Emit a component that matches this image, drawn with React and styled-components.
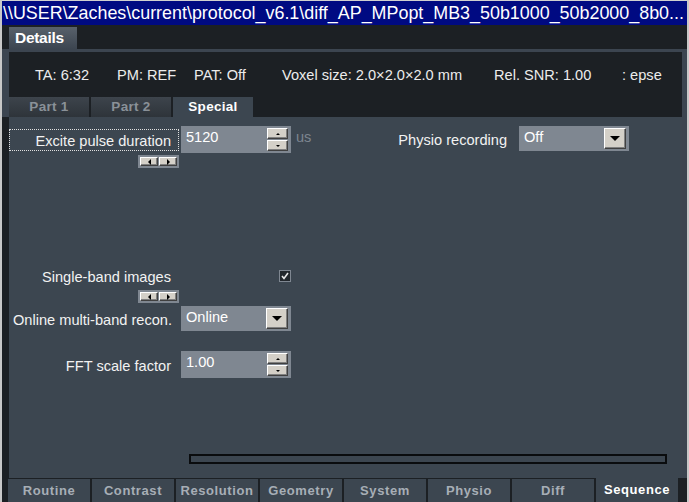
import React from "react";
import styled, { createGlobalStyle } from "styled-components";

const GlobalStyle = createGlobalStyle`
  html, body {
    margin: 0;
    padding: 0;
    background: #1c2024;
  }
  body {
    font-family: "Liberation Sans", Arial, sans-serif;
  }
`;

const Window = styled.div`
  width: 689px;
  height: 502px;
  box-sizing: border-box;
  border-left: 2px solid #c8c8c8;
  border-right: 2px solid #c8c8c8;
  background: #1c2024;
  display: flex;
  flex-direction: column;
  overflow: hidden;
`;

const TitleBar = styled.div`
  height: 25px;
  flex: none;
  background: #000a82;
  color: #ffffff;
  font-size: 17.9px;
  line-height: 24px;
  padding-left: 1px;
  white-space: nowrap;
  overflow: hidden;
  border-top: 1px solid #d0d0d0;
  box-sizing: border-box;
`;

const TopTabs = styled.div`
  height: 24px;
  flex: none;
  display: flex;
  align-items: flex-end;
  padding-left: 7px;
`;

const DetailsTab = styled.div`
  width: 68px;
  height: 22px;
  box-sizing: border-box;
  padding-left: 6px;
  background: linear-gradient(#58616b, #3c4550);
  color: #ffffff;
  font-weight: bold;
  font-size: 15.5px;
  line-height: 22px;
  letter-spacing: -0.3px;
`;

const Frame = styled.div`
  flex: 1;
  display: flex;
  flex-direction: column;
  background: #3c4550;
  padding: 3px 5px 0 0;
`;

const InfoPanel = styled.div`
  height: 45px;
  flex: none;
  display: flex;
  align-items: center;
  background: #1c2024;
  border-left: 7px solid #3c4550;
  padding-left: 26px;
  color: #ececec;
  font-size: 14.6px;
  white-space: nowrap;
`;

const Stat = styled.span`
  width: ${(p) => (p.$w ? `${p.$w}px` : "auto")};
  flex: none;
`;

const SubTabs = styled.div`
  height: 20px;
  flex: none;
  display: flex;
  gap: 2px;
  background: #1c2024;
  border-left: 7px solid #3c4550;
`;

const SubTab = styled.div`
  width: 80px;
  text-align: center;
  font-weight: bold;
  font-size: 13.5px;
  line-height: 20px;
  letter-spacing: 0.3px;
  color: ${(p) => (p.$active ? "#ffffff" : "#8a9198")};
  background: ${(p) =>
    p.$active ? "#3c4650" : "linear-gradient(#3d444c, #2e343a)"};
`;

const Content = styled.div`
  flex: 1;
  display: flex;
  flex-direction: column;
  background: #3c4650;
  border-left: 7px solid #1c2024;
`;

const TopArea = styled.div`
  display: flex;
`;

const LeftColumn = styled.div`
  width: 380px;
  display: flex;
  flex-direction: column;
`;

const RightColumn = styled.div`
  display: flex;
  flex-direction: column;
`;

const Row = styled.div`
  display: flex;
  align-items: center;
  height: ${(p) => p.$h}px;
  margin-top: ${(p) => p.$mt || 0}px;
`;

const Label = styled.div`
  width: ${(p) => p.$w || 170}px;
  box-sizing: border-box;
  text-align: right;
  padding-right: ${(p) => p.$pr ?? 8}px;
  margin-right: ${(p) => p.$mr ?? 2}px;
  color: #f2f2f2;
  font-size: 14.6px;
  white-space: nowrap;
  height: 22px;
  line-height: 22px;
  border: 1px dotted ${(p) => (p.$focus ? "#e0e0e0" : "transparent")};
`;

const Field = styled.div`
  width: 110px;
  height: ${(p) => p.$h || 27}px;
  box-sizing: border-box;
  background: #7f8791;
  display: flex;
  align-items: flex-start;
  justify-content: space-between;
  padding: 2px 3px 2px 5px;
  color: #ffffff;
  font-size: 14.6px;
`;

const FieldText = styled.span`
  line-height: 18px;
`;

const Bevel = styled.div`
  box-sizing: border-box;
  background: #d4d0c8;
  border-top: 1px solid #ffffff;
  border-left: 1px solid #ffffff;
  border-right: 1px solid #404040;
  border-bottom: 1px solid #404040;
  box-shadow: inset -1px -1px 0 #808080;
  display: flex;
  align-items: center;
  justify-content: center;
`;

const SpinStack = styled.div`
  display: flex;
  flex-direction: column;
  gap: 1px;
`;

const SpinButton = styled(Bevel)`
  width: 21px;
  height: 11px;
`;

const DropButton = styled(Bevel)`
  width: 22px;
  height: 21px;
`;

const Unit = styled.span`
  margin-left: 5px;
  color: #7d858f;
  font-size: 14.6px;
  align-self: flex-start;
  margin-top: 3px;
`;

const Scroller = styled.div`
  width: 41px;
  height: 13px;
  box-sizing: border-box;
  background: #7f8791;
  padding: 2px;
  display: flex;
  gap: 1px;
  margin-left: ${(p) => p.$ml}px;
  margin-top: ${(p) => p.$mt}px;
`;

const ScrollButton = styled(Bevel)`
  flex: 1;
  height: 9px;
`;

const CheckCell = styled.div`
  width: 110px;
  display: flex;
  justify-content: flex-end;
`;

const CheckBox = styled.div`
  width: 12px;
  height: 12px;
  box-sizing: border-box;
  background: #22272c;
  border: 1px solid #7f8791;
  display: flex;
  align-items: center;
  justify-content: center;
`;

const Progress = styled.div`
  margin-top: auto;
  margin-bottom: 14px;
  margin-left: 180px;
  width: 478px;
  height: 10px;
  box-sizing: border-box;
  border: 2px solid #0a0c0e;
`;

const BottomTabs = styled.div`
  height: 24px;
  flex: none;
  display: flex;
  gap: 2px;
  background: #1c2024;
  border-left: 6px solid #1c2024;
  margin-right: -5px;
`;

const BottomTab = styled.div`
  width: 82px;
  margin-top: ${(p) => (p.$active ? 0 : 1)}px;
  text-align: center;
  background: #3c4650;
  font-weight: bold;
  font-size: 13px;
  letter-spacing: 0.6px;
  line-height: ${(p) => (p.$active ? 24 : 23)}px;
  color: ${(p) => (p.$active ? "#ffffff" : "#a7aeb6")};
`;

const Tri = ({ dir, size = 3 }) => {
  const s = size;
  const pts = {
    up: `0,${s} ${s * 2},${s} ${s},0`,
    down: `0,0 ${s * 2},0 ${s},${s}`,
    left: `${s},0 ${s},${s * 2} 0,${s}`,
    right: `0,0 0,${s * 2} ${s},${s}`,
  }[dir];
  const w = dir === "up" || dir === "down" ? s * 2 : s;
  const h = dir === "up" || dir === "down" ? s : s * 2;
  return (
    <svg width={w} height={h} viewBox={`0 0 ${w} ${h}`}>
      <polygon points={pts} fill="#000" />
    </svg>
  );
};

const Spinner = () => (
  <SpinStack>
    <SpinButton>
      <Tri dir="up" size={2} />
    </SpinButton>
    <SpinButton>
      <Tri dir="down" size={2} />
    </SpinButton>
  </SpinStack>
);

const SpinField = ({ value }) => (
  <Field>
    <FieldText>{value}</FieldText>
    <Spinner />
  </Field>
);

const Dropdown = ({ value }) => (
  <Field $h={25}>
    <FieldText>{value}</FieldText>
    <DropButton>
      <Tri dir="down" size={5} />
    </DropButton>
  </Field>
);

const ScrollPair = ({ ml, mt }) => (
  <Scroller $ml={ml} $mt={mt}>
    <ScrollButton>
      <Tri dir="left" size={3} />
    </ScrollButton>
    <ScrollButton>
      <Tri dir="right" size={3} />
    </ScrollButton>
  </Scroller>
);

const stats = [
  ["TA: 6:32", 82],
  ["PM: REF", 77],
  ["PAT: Off", 88],
  ["Voxel size: 2.0×2.0×2.0 mm", 212],
  ["Rel. SNR: 1.00", 128],
  [": epse", 0],
];

const bottomTabs = [
  "Routine",
  "Contrast",
  "Resolution",
  "Geometry",
  "System",
  "Physio",
  "Diff",
  "Sequence",
];

export default function App() {
  return (
    <>
      <GlobalStyle />
      <Window>
        <TitleBar>
          {"\\\\USER\\Zaches\\current\\protocol_v6.1\\diff_AP_MPopt_MB3_50b1000_50b2000_8b0..."}
        </TitleBar>
        <TopTabs>
          <DetailsTab>Details</DetailsTab>
        </TopTabs>
        <Frame>
          <InfoPanel>
            {stats.map(([text, w]) => (
              <Stat key={text} $w={w}>
                {text}
              </Stat>
            ))}
          </InfoPanel>
          <SubTabs>
            <SubTab>Part 1</SubTab>
            <SubTab>Part 2</SubTab>
            <SubTab $active>Special</SubTab>
          </SubTabs>
          <Content>
            <TopArea>
              <LeftColumn>
                <Row $h={27} $mt={9}>
                  <Label $focus $w={170} $pr={7}>
                    Excite pulse duration
                  </Label>
                  <SpinField value="5120" />
                  <Unit>us</Unit>
                </Row>
                <ScrollPair ml={129} mt={2} />
                <Row $h={14} $mt={101}>
                  <Label $w={172} $pr={9} $mr={0}>
                    Single-band images
                  </Label>
                  <CheckCell>
                    <CheckBox>
                      <svg width="8" height="8" viewBox="0 0 8 8">
                        <path
                          d="M1 4 L3 6.5 L7 1"
                          stroke="#e8e8e8"
                          strokeWidth="1.6"
                          fill="none"
                        />
                      </svg>
                    </CheckBox>
                  </CheckCell>
                </Row>
                <ScrollPair ml={129} mt={7} />
                <Row $h={25} $mt={3}>
                  <Label $w={172} $pr={8} $mr={0}>
                    Online multi-band recon.
                  </Label>
                  <Dropdown value="Online" />
                </Row>
                <Row $h={27} $mt={20}>
                  <Label $w={171} $pr={8} $mr={1}>
                    FFT scale factor
                  </Label>
                  <SpinField value="1.00" />
                </Row>
              </LeftColumn>
              <RightColumn>
                <Row $h={25} $mt={9}>
                  <Label $w={128} $pr={9}>
                    Physio recording
                  </Label>
                  <Dropdown value="Off" />
                </Row>
              </RightColumn>
            </TopArea>
            <Progress />
          </Content>
          <BottomTabs>
            {bottomTabs.map((t) => (
              <BottomTab key={t} $active={t === "Sequence"}>
                {t}
              </BottomTab>
            ))}
          </BottomTabs>
        </Frame>
      </Window>
    </>
  );
}
